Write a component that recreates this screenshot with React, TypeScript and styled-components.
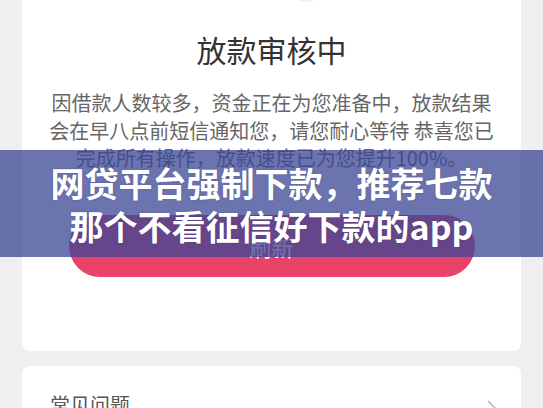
import React from "react";
import styled, { createGlobalStyle } from "styled-components";

const Global = createGlobalStyle`
  html, body { margin: 0; padding: 0; background: #efefef; }
  body { font-family: "Noto Sans CJK SC", "Noto Sans", sans-serif; overflow: hidden; }
`;

const Page = styled.div`
  position: relative;
  width: 543px;
  height: 408px;
  overflow: hidden;
  padding: 0 22px;
  box-sizing: border-box;
  display: flex;
  flex-direction: column;
  gap: 15px;
`;

const Card = styled.div<{ $top?: number }>`
  background: #ffffff;
  border-radius: 8px;
  margin-top: ${(p) => (p.$top ? `${p.$top}px` : "0")};
  display: flex;
  flex-direction: column;
  align-items: center;
  flex-shrink: 0;
`;

const StatusCard = styled(Card)`
  padding: 0 46px 74px;
`;

const Illustration = styled.svg`
  display: block;
  width: 499px;
  height: 42px;
  flex-shrink: 0;
`;

const Title = styled.h1`
  margin: 26px 0 0;
  font-size: 30px;
  line-height: 42px;
  font-weight: 400;
  color: #333333;
  text-align: center;
`;

const Message = styled.p`
  margin: 19px 0 0;
  font-size: 20px;
  line-height: 27.5px;
  color: #666666;
  text-align: center;
  white-space: nowrap;
`;

const RefreshButton = styled.button`
  margin-top: 43px;
  width: 406px;
  height: 62px;
  border: none;
  border-radius: 31px;
  background: #ea4369;
  color: #ffffff;
  font-family: inherit;
  font-size: 22px;
  display: flex;
  align-items: center;
  justify-content: center;
`;

const FaqCard = styled(Card)`
  flex-direction: row;
  align-items: flex-start;
  justify-content: space-between;
  padding: 25px 22px 20px 28px;
`;

const FaqLabel = styled.span`
  font-size: 20px;
  line-height: 28px;
  color: #555555;
`;

const Chevron = styled.svg`
  width: 14px;
  height: 20px;
  margin-top: 8px;
`;

const Banner = styled.div`
  position: absolute;
  left: 0;
  top: 150px;
  width: 543px;
  height: 107px;
  background: rgba(59, 70, 150, 0.75);
  display: flex;
  flex-direction: column;
  align-items: center;
  justify-content: center;
`;

const BannerLine = styled.div`
  color: #ffffff;
  font-size: 34px;
  line-height: 43px;
  font-weight: 700;
  white-space: nowrap;
  text-shadow: 0 0 2px rgba(40, 40, 80, 0.35);
`;

export default function App() {
  return (
    <>
      <Global />
      <Page>
        <StatusCard $top={-40}>
          <Illustration viewBox="0 0 499 42">
            <ellipse cx="284" cy="22" rx="20" ry="20" fill="#f4f3de" />
          </Illustration>
          <Title>放款审核中</Title>
          <Message>
            因借款人数较多，资金正在为您准备中，放款结果
            <br />
            会在早八点前短信通知您，请您耐心等待 恭喜您已
            <br />
            完成所有操作，放款速度已为您提升100%。
          </Message>
          <RefreshButton>刷新</RefreshButton>
        </StatusCard>
        <FaqCard>
          <FaqLabel>常见问题</FaqLabel>
          <Chevron viewBox="0 0 14 20">
            <path d="M3 2 L11 10 L3 18" fill="none" stroke="#c4c4c4" strokeWidth="2" />
          </Chevron>
        </FaqCard>
        <Banner>
          <BannerLine>网贷平台强制下款，推荐七款</BannerLine>
          <BannerLine>那个不看征信好下款的app</BannerLine>
        </Banner>
      </Page>
    </>
  );
}
